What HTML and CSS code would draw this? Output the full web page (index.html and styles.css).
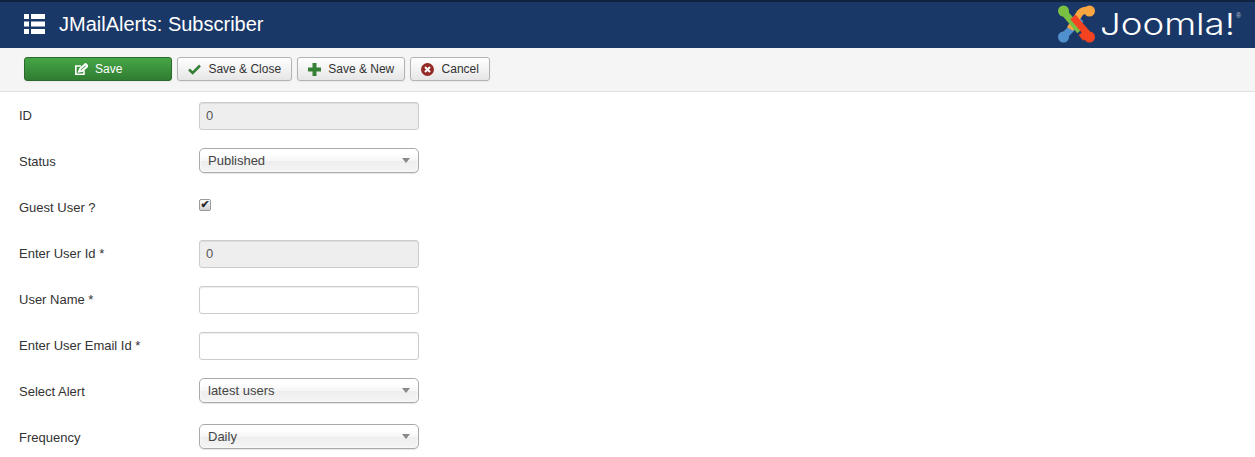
FILE: index.html
```html
<!DOCTYPE html>
<html lang="en">
<head>
  <meta charset="UTF-8">
  <title>JMailAlerts: Subscriber</title>
  <link rel="stylesheet" href="styles.css">
</head>
<body>

  <header class="header">
    <svg class="title-icon" width="21" height="21" viewBox="0 0 21 21">
      <path fill="#fff" d="M0 0h5v5H0zM7 0h14v5H7zM0 7.500h5v5H0zM7 7.500h14v5H7zM0 15h5v5H0zM7 15h14v5H7z"/>
    </svg>
    <h1 class="title">JMailAlerts: Subscriber</h1>
    <div class="logo">
      <svg width="37" height="38" viewBox="0 0 37 38" fill="none" stroke-width="7">
        <circle cx="5.500" cy="32" r="5.500" fill="#5091cd"/>
        <path stroke="#5091cd" d="M5 32 L23 14"/>
        <circle cx="31.500" cy="6" r="5.500" fill="#f9a541"/>
        <path stroke="#f9a541" d="M32 6 Q26 4 22 8 L12 24"/>
        <circle cx="5.500" cy="6" r="5.500" fill="#7ac143"/>
        <path stroke="#7ac143" d="M5 6 L22 26"/>
        <circle cx="31.500" cy="32" r="5.500" fill="#f44321"/>
        <path stroke="#f44321" d="M15 12 L32 32 M23 33 L31 26"/>
      </svg>
      <span class="logo-text">Joomla!</span>
      <span class="logo-reg">®</span>
    </div>
  </header>

  <div class="toolbar">
    <button class="btn btn-save" type="button">
      <svg width="14" height="13" viewBox="0 0 14 13" fill="none" stroke="#fff" stroke-width="1.600">
        <path d="M10 7.500V11.200H1.800V3H7"/>
        <path stroke-width="2" d="M5 8.500l1-2.500 5.500-5 2 2-5.500 5z"/>
      </svg>
      Save
    </button>
    <button class="btn btn-close" type="button">
      <svg width="13" height="11" viewBox="0 0 13 11" fill="none" stroke="#378137" stroke-width="2.600">
        <path d="M1 5.500l3.700 3.500L12 1.500"/>
      </svg>
      Save &amp; Close
    </button>
    <button class="btn btn-new" type="button">
      <svg width="13" height="13" viewBox="0 0 13 13">
        <path fill="#378137" d="M4.500 0h4v4.500H13v4H8.500V13h-4V8.500H0v-4h4.500z"/>
      </svg>
      Save &amp; New
    </button>
    <button class="btn btn-cancel" type="button">
      <svg width="13" height="13" viewBox="0 0 13 13">
        <circle cx="6.500" cy="6.500" r="6.500" fill="#942a25"/>
        <path stroke="#fff" stroke-width="2" d="M4 4l5 5M9 4l-5 5"/>
      </svg>
      Cancel
    </button>
  </div>

  <form class="form">
    <div class="row">
      <label class="row-label">ID</label>
      <input class="field" type="text" value="0" disabled>
    </div>
    <div class="row">
      <label class="row-label">Status</label>
      <div class="select-wrap">
        <select class="select"><option>Published</option></select>
      </div>
    </div>
    <div class="row">
      <label class="row-label">Guest User ?</label>
      <input class="check" type="checkbox" checked>
    </div>
    <div class="row">
      <label class="row-label">Enter User Id *</label>
      <input class="field" type="text" value="0" disabled>
    </div>
    <div class="row">
      <label class="row-label">User Name *</label>
      <input class="field" type="text">
    </div>
    <div class="row">
      <label class="row-label">Enter User Email Id *</label>
      <input class="field" type="text">
    </div>
    <div class="row">
      <label class="row-label">Select Alert</label>
      <div class="select-wrap">
        <select class="select"><option>latest users</option></select>
      </div>
    </div>
    <div class="row">
      <label class="row-label">Frequency</label>
      <div class="select-wrap">
        <select class="select"><option>Daily</option></select>
      </div>
    </div>
  </form>

</body>
</html>
```

FILE: styles.css
```css
html, body {
  height: 457px;
  overflow: hidden;
}

body {
  margin: 0;
  background-color: white;
  color: #333;
  font-family: "Liberation Sans", Arial, sans-serif;
  font-size: 13px;
  line-height: 18px;
}

.header {
  display: flex;
  align-items: center;
  box-sizing: border-box;
  height: 48px;
  padding: 0 15px 2px 24px;
  background-color: #1a3867;
  border-top: 2px solid #0f2340;
  color: white;
}

.title-icon {
  margin-right: 14px;
}

.title {
  margin: 0;
  font-size: 20px;
  font-weight: normal;
  line-height: 24px;
}

.logo {
  display: flex;
  align-items: center;
  margin-left: auto;
}

.logo-text {
  width: 136px;
  margin-left: 5px;
  font-family: Inter, sans-serif;
  font-size: 30px;
  font-weight: 300;
  line-height: 38px;
  transform: scaleX(1.22);
  transform-origin: left center;
}

.logo-reg {
  align-self: flex-start;
  width: 4px;
  margin-top: 4px;
  font-size: 7px;
  line-height: 14px;
  color: #b9c3d3;
}

.toolbar {
  display: flex;
  gap: 5px;
  box-sizing: border-box;
  height: 44px;
  padding: 9px 24px 0;
  background-color: #f5f5f5;
  border-bottom: 1px solid #e1e1e1;
}

.btn {
  display: flex;
  align-items: center;
  justify-content: center;
  gap: 7.5px;
  box-sizing: border-box;
  height: 24px;
  padding: 0;
  background: linear-gradient(#fff, #e6e6e6);
  border: 1px solid #b3b3b3;
  border-radius: 3px;
  box-shadow: 0 1px 2px rgba(0, 0, 0, 0.05);
  color: #333;
  font-family: inherit;
  font-size: 12px;
}

.btn-save {
  width: 148px;
  background: linear-gradient(#46a546, #2f7d32);
  border-color: #2a6b2d;
  color: white;
}

.btn-close {
  width: 115px;
}

.btn-new {
  width: 108px;
}

.btn-cancel {
  width: 80px;
}

.form {
  padding: 10px 0 0 19px;
}

.row {
  display: flex;
  align-items: flex-start;
  height: 46px;
}

.row-label {
  width: 180px;
  padding-top: 5px;
}

.field {
  box-sizing: border-box;
  width: 220px;
  height: 28px;
  padding: 3px 6px 5px;
  background-color: white;
  border: 1px solid #ccc;
  border-radius: 3px;
  box-shadow: inset 0 1px 1px rgba(0, 0, 0, 0.075);
  color: #555;
  font-family: inherit;
  font-size: 13px;
}

.field:disabled {
  background-color: #eee;
}

.select-wrap {
  position: relative;
  width: 220px;
}

.select-wrap::after {
  content: "";
  position: absolute;
  top: 10px;
  right: 9px;
  border-top: 5px solid #888;
  border-left: 4px solid transparent;
  border-right: 4px solid transparent;
}

.select {
  display: block;
  appearance: none;
  box-sizing: border-box;
  width: 100%;
  height: 25px;
  padding: 0 0 1px 8px;
  background: linear-gradient(#fff 20%, #f6f6f6 50%, #eee 52%, #f4f4f4 100%);
  border: 1px solid #aaa;
  border-radius: 5px;
  box-shadow: inset 0 0 3px #fff, 0 1px 1px rgba(0, 0, 0, 0.1);
  color: #444;
  font-family: inherit;
  font-size: 13px;
}

.check {
  position: relative;
  appearance: none;
  box-sizing: border-box;
  width: 12px;
  height: 12px;
  margin: 5px 0 0;
  background: linear-gradient(#fff, #d0d0d0);
  border: 1px solid #9a9a9a;
  border-radius: 2px;
}

.check::before {
  content: "✔";
  position: absolute;
  top: -1px;
  left: 0;
  width: 10px;
  height: 10px;
  color: #222;
  font-family: "DejaVu Sans", sans-serif;
  font-size: 11px;
  line-height: 11px;
  text-align: center;
  -webkit-text-stroke: 0.3px #222;
}
```
